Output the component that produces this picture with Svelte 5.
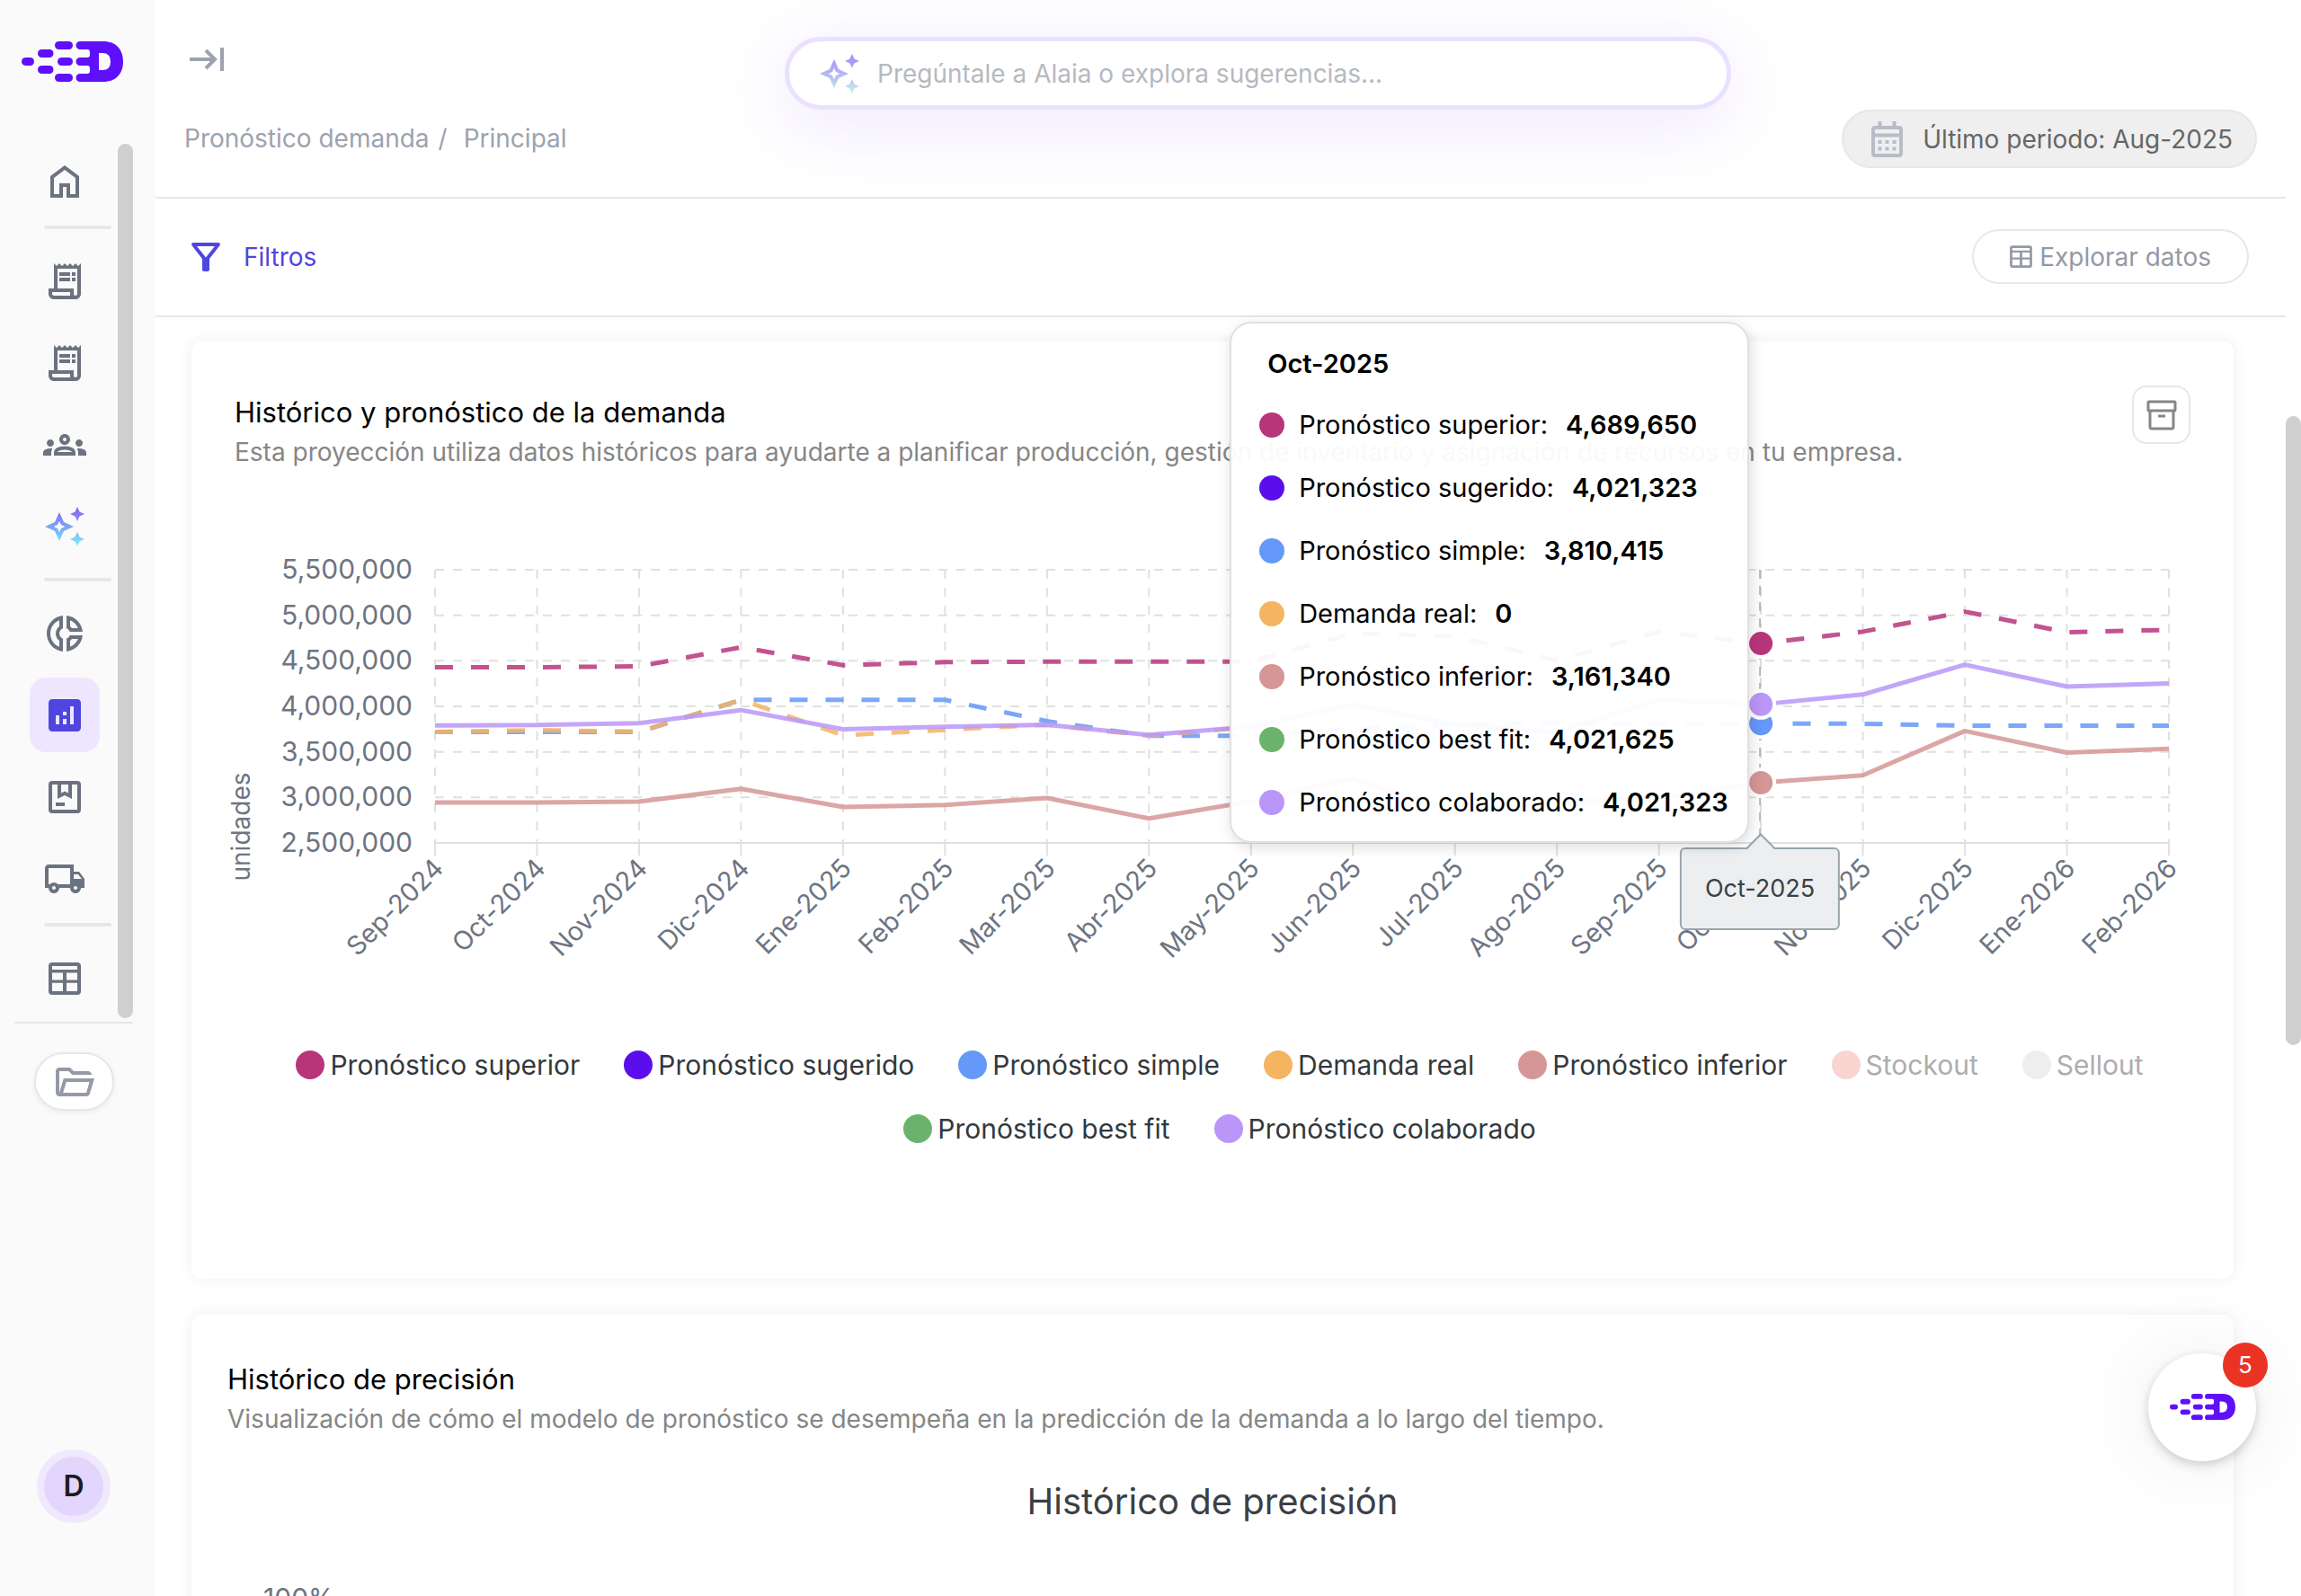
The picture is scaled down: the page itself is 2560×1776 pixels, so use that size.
<script lang="ts">
    interface Series {
        name: string;
        color: string;
        dashed?: boolean;
        line?: boolean;
        muted?: boolean;
        tip?: string;
        values?: number[];
    }

    const icons = {
        home: 'M6 19h3v-6h6v6h3v-9l-6-4.5L6 10v9Zm-2 2V9l8-6 8 6v12h-7v-6h-2v6H4Z',
        receipt: 'M19.5 3.5 18 2l-1.5 1.5L15 2l-1.5 1.5L12 2l-1.5 1.5L9 2 7.5 3.5 6 2v14H3v3c0 1.66 1.34 3 3 3h12c1.66 0 3-1.34 3-3V2l-1.5 1.5zM15 20H6c-.55 0-1-.45-1-1v-1h10v2zm4-1c0 .55-.45 1-1 1s-1-.45-1-1v-3H8V5h11v14zM9 7h6v2H9zM16 7h2v2h-2zM9 10h6v2H9zM16 10h2v2h-2z',
        groups: 'M4 13c1.1 0 2-.9 2-2s-.9-2-2-2-2 .9-2 2 .9 2 2 2zm1.13 1.1c-.37-.06-.74-.1-1.13-.1-.99 0-1.93.21-2.78.58C.48 14.9 0 15.62 0 16.43V18h4.5v-1.61c0-.83.23-1.61.63-2.29zM20 13c1.1 0 2-.9 2-2s-.9-2-2-2-2 .9-2 2 .9 2 2 2zm4 3.43c0-.81-.48-1.53-1.22-1.85-.85-.37-1.79-.58-2.78-.58-.39 0-.76.04-1.13.1.4.68.63 1.46.63 2.29V18H24v-1.57zm-7.76-2.78c-1.17-.52-2.61-.9-4.24-.9-1.63 0-3.07.39-4.24.9C6.68 14.13 6 15.21 6 16.39V18h12v-1.61c0-1.18-.68-2.26-1.76-2.74zM8.07 16c.09-.23.13-.39.91-.69.97-.38 1.99-.56 3.02-.56s2.05.18 3.02.56c.77.3.81.46.91.69H8.07zM12 8c.55 0 1 .45 1 1s-.45 1-1 1-1-.45-1-1 .45-1 1-1m0-2c-1.66 0-3 1.34-3 3s1.34 3 3 3 3-1.34 3-3-1.34-3-3-3z',
        sparkles: 'M19 9l1.25-2.75L23 5l-2.75-1.25L19 1l-1.25 2.75L15 5l2.75 1.25L19 9zm0 6l-1.25 2.75L15 19l2.75 1.25L19 23l1.25-2.75L23 19l-2.75-1.25L19 15zm-7.5-5.5L9 4 6.5 9.5 1 12l5.5 2.5L9 20l2.5-5.5L17 12l-5.5-2.5zm-1.51 3.49L9 15.17l-.99-2.18L5.83 12l2.18-.99L9 8.83l.99 2.18 2.18.99-2.18.99z',
        donut: 'M14.82 11h7.13c-.47-4.72-4.23-8.48-8.95-8.95v7.13c.85.31 1.51.97 1.82 1.82zM15 4.58C17 5.4 18.6 7 19.42 9h-3.43c-.28-.37-.62-.71-.99-.99V4.58zM2 12c0 5.19 3.95 9.45 9 9.95v-7.13C9.84 14.4 9 13.3 9 12c0-1.3.84-2.4 2-2.82V2.05c-5.05.5-9 4.76-9 9.95zm7-7.42v3.44c-1.23.92-2 2.39-2 3.98 0 1.59.77 3.06 2 3.99v3.44C6.04 18.24 4 15.35 4 12c0-3.35 2.04-6.24 5-7.42zm4 10.24v7.13c4.72-.47 8.48-4.23 8.95-8.95h-7.13c-.31.85-.97 1.51-1.82 1.82zm2 1.17c.37-.28.71-.61.99-.99h3.43C18.6 17 17 18.6 15 19.42v-3.43z',
        analytics: 'M19 3H5c-1.1 0-2 .9-2 2v14c0 1.1.9 2 2 2h14c1.1 0 2-.9 2-2V5c0-1.1-.9-2-2-2zM9 17H7v-5h2v5zm4 0h-2v-3h2v3zm0-5h-2v-2h2v2zm4 5h-2V7h2v10z',
        box: 'M5 3h14q2 0 2 2v14q0 2-2 2H5q-2 0-2-2V5q0-2 2-2zM5 5v14h14V5h-3v8l-4-2-4 2V5zM10 5v4.75l2-1 2 1V5zM7 15h5v2H7z',
        truck: 'M20 8h-3V4H3c-1.1 0-2 .9-2 2v11h2c0 1.66 1.34 3 3 3s3-1.34 3-3h6c0 1.66 1.34 3 3 3s3-1.34 3-3h2v-5l-3-4zm-.5 1.5 1.96 2.5H17V9.5h2.5zM6 18c-.55 0-1-.45-1-1s.45-1 1-1 1 .45 1 1-.45 1-1 1zm2.22-3c-.55-.61-1.33-1-2.22-1s-1.67.39-2.22 1H3V6h12v9H8.22zM18 18c-.55 0-1-.45-1-1s.45-1 1-1 1 .45 1 1-.45 1-1 1z',
        table: 'M5 3h14q2 0 2 2v14q0 2-2 2H5q-2 0-2-2V5q0-2 2-2zM5 5v2h14V5zM5 8.7v4h6v-4zM13 8.7v4h6v-4zM5 14.4V19h6v-4.6zM13 14.4V19h6v-4.6z',
        folder: 'M4 20q-.825 0-1.412-.587Q2 18.825 2 18V6q0-.825.588-1.412Q3.175 4 4 4h6l2 2h8q.825 0 1.413.588Q22 7.175 22 8H11.175l-2-2H4v12l2.4-8h17.1l-2.575 8.575q-.2.65-.738 1.038Q19.65 20 19 20Zm2.1-2H19l1.8-6H7.9Z',
        filter: 'M7 6h10l-5.01 6.3L7 6zm-2.75-.39C6.27 8.2 10 13 10 13v6c0 .55.45 1 1 1h2c.55 0 1-.45 1-1v-6s3.72-4.8 5.74-7.39c.51-.66.04-1.61-.79-1.61H5.04c-.83 0-1.3.95-.79 1.61z',
    };

    const nav = [
        [{ id: 'home', label: 'Inicio' }],
        [
            { id: 'receipt', label: 'Ventas' },
            { id: 'receipt', label: 'Compras' },
            { id: 'groups', label: 'Clientes' },
            { id: 'sparkles', label: 'Alaia' },
        ],
        [
            { id: 'donut', label: 'Segmentos' },
            { id: 'analytics', label: 'Pronóstico' },
            { id: 'box', label: 'Inventario' },
            { id: 'truck', label: 'Envíos' },
        ],
        [{ id: 'table', label: 'Datos' }],
    ];

    const months = [
        'Sep-2024', 'Oct-2024', 'Nov-2024', 'Dic-2024', 'Ene-2025', 'Feb-2025',
        'Mar-2025', 'Abr-2025', 'May-2025', 'Jun-2025', 'Jul-2025', 'Ago-2025',
        'Sep-2025', 'Oct-2025', 'Nov-2025', 'Dic-2025', 'Ene-2026', 'Feb-2026',
    ];

    // values in millions of units
    const series: Series[] = [
        {
            name: 'Pronóstico superior', color: '#b8357c', dashed: true, line: true, tip: '4,689,650',
            values: [4.429, 4.429, 4.439, 4.649, 4.452, 4.485, 4.491, 4.491, 4.491, 4.8, 4.769, 4.504, 4.82, 4.69, 4.82, 5.04, 4.813, 4.84],
        },
        { name: 'Pronóstico sugerido', color: '#5b0eeb', tip: '4,021,323' },
        {
            name: 'Pronóstico simple', color: '#6598f8', dashed: true, line: true, tip: '3,810,415',
            values: [3.719, 3.719, 3.719, 4.071, 4.071, 4.071, 3.837, 3.676, 3.676, 3.755, 3.8, 3.817, 3.8, 3.81, 3.809, 3.787, 3.787, 3.787],
        },
        {
            name: 'Demanda real', color: '#f4b460', dashed: true, line: true, tip: '0',
            values: [3.719, 3.739, 3.722, 4.071, 3.683, 3.742, 3.798, 3.676, 3.775, 4.01, 3.8, 3.716],
        },
        {
            name: 'Pronóstico inferior', color: '#d59795', line: true, tip: '3,161,340',
            values: [2.944, 2.944, 2.953, 3.095, 2.894, 2.917, 2.993, 2.769, 2.956, 3.21, 2.83, 2.95, 2.99, 3.161, 3.243, 3.73, 3.492, 3.534],
        },
        { name: 'Stockout', color: '#fad4d1', muted: true },
        { name: 'Sellout', color: '#eeeeee', muted: true },
        { name: 'Pronóstico best fit', color: '#6bb26c', tip: '4,021,625' },
        {
            name: 'Pronóstico colaborado', color: '#ba96f8', line: true, tip: '4,021,323',
            values: [3.79, 3.796, 3.814, 3.959, 3.749, 3.775, 3.798, 3.686, 3.775, 4.024, 3.8, 3.716, 4.07, 4.021, 4.13, 4.458, 4.217, 4.251],
        },
    ];

    const lines = series.filter((s) => s.line);
    const tips = series.filter((s) => s.tip);
    const ticks = [5.5, 5, 4.5, 4, 3.5, 3, 2.5];

    // plot box inside the chart
    const left = 223;
    const right = 24;
    const top = 74;
    const bottom = 378;

    let hovered = $state(13);
    let width = $state(2176);

    const step = $derived((width - left - right) / (months.length - 1));
    const hoverX = $derived(x(hovered));

    function x(i: number) {
        return left + i * step;
    }

    function y(v: number) {
        return bottom - ((v - 2.5) / 3) * (bottom - top);
    }

    function points(values: number[]) {
        return values.map((v, i) => `${x(i)},${y(v)}`).join(' ');
    }

    function format(v: number) {
        return (v * 1000000).toLocaleString('en-US');
    }
</script>

{#snippet icon(id: string, fill = 'currentColor')}
    <svg class="icon" viewBox="0 0 24 24" aria-hidden="true">
        <path d={icons[id]} {fill} fill-rule="evenodd" />
    </svg>
{/snippet}

{#snippet logo()}
    <svg class="logo" viewBox="0 0 113 45" aria-hidden="true" fill="currentColor">
        <rect x="0" y="18" width="14" height="9" rx="4.5" />
        <rect x="18" y="9" width="17.5" height="9" rx="4.5" />
        <rect x="18" y="27" width="17.5" height="9" rx="4.5" />
        <rect x="37" y="0" width="20" height="9" rx="4.5" />
        <rect x="40" y="18" width="17" height="9" rx="4.5" />
        <rect x="37" y="36" width="20" height="9" rx="4.5" />
        <path
            fill-rule="evenodd"
            d="M65 0H91C105 0 113 9 113 22.5S105 45 91 45H65a4.5 4.5 0 0 1 0-9h8q3 0 3-3v-3q0-3-3-3h-8a4.5 4.5 0 0 1 0-9h8q3 0 3-3v-3q0-3-3-3h-8a4.5 4.5 0 0 1 0-9zM86 13v19h4q9 0 9-9.5t-9-9.5z"
        />
    </svg>
{/snippet}

<svg class="defs" width="0" height="0" aria-hidden="true">
    <defs>
        <linearGradient id="spark" x1="0" y1="0" x2="0" y2="1">
            <stop offset="0" stop-color="#8b5cf6" />
            <stop offset="0.5" stop-color="#7aa5f8" />
            <stop offset="1" stop-color="#7df0fa" />
        </linearGradient>
        <linearGradient id="spark-soft" x1="0" y1="0" x2="0" y2="1">
            <stop offset="0" stop-color="#aa86f8" />
            <stop offset="0.5" stop-color="#b4b6f4" />
            <stop offset="1" stop-color="#c2f3ea" />
        </linearGradient>
    </defs>
</svg>

<div class="app">
    <aside>
        <a class="brand" href="#inicio" aria-label="Inicio">{@render logo()}</a>

        <div class="scroller">
            <nav>
                {#each nav as group, g}
                    {#if g > 0}
                        <hr class:wide={g === 2} />
                    {/if}
                    {#each group as item}
                        <a href="#{item.id}" class:active={item.id === 'analytics'} aria-label={item.label}>
                            {@render icon(item.id, item.id === 'sparkles' ? 'url(#spark)' : 'currentColor')}
                        </a>
                    {/each}
                {/each}
            </nav>
            <div class="thumb"></div>
        </div>

        <div class="files">
            <button aria-label="Archivos">{@render icon('folder')}</button>
        </div>

        <button class="avatar" aria-label="Cuenta">D</button>
    </aside>

    <main>
        <header>
            <div class="where">
                <button class="collapse" aria-label="Expandir menú">
                    <svg viewBox="0 0 38 26" aria-hidden="true" fill="none" stroke="currentColor" stroke-width="4">
                        <path d="M0 13H28M18 3l10 10-10 10M36 0v26" />
                    </svg>
                </button>
                <div class="crumbs">
                    <a href="#demanda">Pronóstico demanda</a>
                    <span>/</span>
                    <a href="#principal">Principal</a>
                </div>
            </div>

            <label class="search">
                {@render icon('sparkles', 'url(#spark-soft)')}
                <input type="text" aria-label="Buscar" placeholder="Pregúntale a Alaia o explora sugerencias..." />
            </label>

            <button class="period">
                <svg viewBox="0 0 35 40" aria-hidden="true" fill="none" stroke="currentColor" stroke-width="4">
                    <rect x="2" y="7" width="31" height="31" rx="2" />
                    <path d="M2 15.5h31M9.5 0v7M25.5 0v7" />
                    <path d="M7.5 23h4M15.5 23h4M23.5 23h4M7.5 30.5h4M15.5 30.5h4M23.5 30.5h4" />
                </svg>
                Último periodo: Aug-2025
            </button>
        </header>

        <div class="toolbar">
            <button class="filters">{@render icon('filter')} Filtros</button>
            <button class="explore">{@render icon('table')} Explorar datos</button>
        </div>

        <div class="content">
            <section class="card">
                <div class="head">
                    <div class="titles">
                        <h2>Histórico y pronóstico de la demanda</h2>
                        <p>Esta proyección utiliza datos históricos para ayudarte a planificar producción, gestión de inventario y asignación de recursos en tu empresa.</p>
                    </div>
                    <button class="archive" aria-label="Archivar">
                        <svg viewBox="0 0 34 34" aria-hidden="true" fill="none" stroke="currentColor" stroke-width="3">
                            <rect x="2" y="2" width="30" height="10" rx="1" />
                            <path d="M4 12v18q0 2 2 2h22q2 0 2-2V12M13 18h8" />
                        </svg>
                    </button>
                </div>

                <div class="chart" bind:clientWidth={width}>
                    <svg class="plot" role="img" aria-label="Histórico y pronóstico de la demanda">
                        {#each ticks as t}
                            <line class="grid" x1={left} x2={width - right} y1={y(t)} y2={y(t)} />
                            <text class="value" x={left - 25} y={y(t) + 10}>{format(t)}</text>
                        {/each}
                        {#each months as month, i}
                            <line class="grid" x1={x(i)} x2={x(i)} y1={top} y2={bottom} />
                            <line class="axis" x1={x(i)} x2={x(i)} y1={bottom} y2={bottom + 14} />
                            <text class="month" transform="translate({x(i) + 11} {bottom + 30}) rotate(-45)">{month}</text>
                        {/each}
                        <line class="axis" x1={left} x2={width - right} y1={bottom} y2={bottom} />
                        <text class="unit" transform="translate(17 360) rotate(-90)">unidades</text>

                        {#each lines as s}
                            <polyline class="line" class:dashed={s.dashed} points={points(s.values)} stroke={s.color} />
                        {/each}

                        <line class="pointer" x1={hoverX - 1} x2={hoverX - 1} y1={top} y2={bottom} />
                        {#each lines as s}
                            {#if s.values[hovered]}
                                <circle class="dot" cx={hoverX} cy={y(s.values[hovered])} r="15" fill={s.color} />
                            {/if}
                        {/each}
                    </svg>

                    <div class="tag" style:left="{hoverX - 1}px">{months[hovered]}</div>

                    <div class="tooltip" style:right="{width - hoverX + 13}px">
                        <strong>{months[hovered]}</strong>
                        <ul>
                            {#each tips as s}
                                <li>
                                    <i style:background={s.color}></i>
                                    <span>{s.name}:</span>
                                    <b>{s.tip}</b>
                                </li>
                            {/each}
                        </ul>
                    </div>
                </div>

                <div class="legend">
                    {#each series as s}
                        <button class:muted={s.muted}>
                            <i style:background={s.color}></i>{s.name}
                        </button>
                    {/each}
                </div>
            </section>

            <section class="card precision">
                <div class="titles">
                    <h2>Histórico de precisión</h2>
                    <p>Visualización de cómo el modelo de pronóstico se desempeña en la predicción de la demanda a lo largo del tiempo.</p>
                </div>
                <h3>Histórico de precisión</h3>
                <div class="percent">100%</div>
            </section>
        </div>

        <div class="page-thumb"></div>
    </main>

    <button class="chat" aria-label="Abrir chat">
        {@render logo()}
        <span class="badge">5</span>
    </button>
</div>

<style>
    :global(body) {
        margin: 0;
        background: #fff;
    }

    .app {
        display: flex;
        height: 100vh;
        overflow: hidden;
        position: relative;
        font-family: Inter, "Liberation Sans", sans-serif;
        font-size: 28px;
        line-height: 36px;
        color: #000;
    }

    .app * {
        box-sizing: border-box;
    }

    .defs {
        position: absolute;
    }

    button {
        display: flex;
        align-items: center;
        justify-content: center;
        padding: 0;
        border: 0;
        background: none;
        font: inherit;
        color: inherit;
        white-space: nowrap;
        cursor: pointer;
    }

    a {
        color: inherit;
        text-decoration: none;
    }

    .icon {
        display: block;
        width: 48px;
        height: 48px;
        flex: none;
    }

    .logo {
        display: block;
        width: 100%;
        color: #5f0ffa;
    }

    /* sidebar */
    aside {
        display: flex;
        flex-direction: column;
        width: 173px;
        flex: none;
        background: #fafafa;
        color: #6b7280;
    }

    .brand {
        width: 113px;
        margin: 46px 0 69px 24px;
    }

    .scroller {
        display: flex;
        justify-content: space-between;
        margin: 0 25px 0 33px;
        padding-bottom: 4px;
    }

    nav {
        display: flex;
        flex-direction: column;
        gap: 8px;
        padding-bottom: 3px;
    }

    nav a {
        display: flex;
        align-items: center;
        justify-content: center;
        width: 78px;
        height: 83px;
        border-radius: 18px;
    }

    nav a.active {
        background: #eee6fe;
        color: #4f46df;
    }

    nav hr {
        width: 75px;
        height: 4px;
        margin: 0 0 8px 16px;
        border: 0;
        border-radius: 2px;
        background: #e5e7eb;
    }

    nav hr.wide {
        margin-top: 8px;
    }

    .thumb {
        width: 17px;
        border-radius: 9px;
        background: #cfcfcf;
        margin-left: -16px;
    }

    .files {
        display: flex;
        justify-content: center;
        margin: 0 25px 0 16px;
        padding-top: 32px;
        border-top: 2px solid #e5e7eb;
    }

    .files button {
        width: 89px;
        height: 65px;
        border: 2px solid #e5e7eb;
        border-radius: 33px;
        background: #fff;
        color: #949aa5;
        box-shadow: 0 2px 6px rgba(0, 0, 0, 0.06);
    }

    .avatar {
        width: 82px;
        height: 82px;
        margin: auto 0 81px 41px;
        border: 8px solid #f0e9fe;
        border-radius: 50%;
        background: #e2d6fc;
        font-size: 32px;
        font-weight: 600;
        color: #1c1c1c;
    }

    /* header */
    main {
        display: flex;
        flex-direction: column;
        flex: 1;
        min-width: 0;
        padding-right: 17px;
        position: relative;
    }

    header {
        display: grid;
        grid-template-columns: 668fr 1053fr 585fr;
        align-items: start;
        padding: 41px 32px 32px;
        border-bottom: 2px solid #e5e7eb;
        color: #9ca3af;
    }

    .where {
        display: flex;
        flex-direction: column;
        align-items: flex-start;
        gap: 57px;
        padding-top: 12px;
    }

    .collapse {
        margin-left: 6px;
    }

    .collapse svg {
        width: 38px;
        height: 26px;
    }

    .crumbs {
        display: flex;
        gap: 10px;
    }

    .crumbs a:last-child {
        margin-left: 8px;
    }

    .search {
        display: flex;
        align-items: center;
        gap: 16px;
        height: 81px;
        padding: 0 32px;
        border: 5px solid #e9e1fe;
        border-radius: 41px;
        background: #fff;
        box-shadow: 0 16px 80px rgba(124, 58, 237, 0.12);
    }

    input {
        flex: 1;
        min-width: 0;
        border: 0;
        outline: 0;
        background: none;
        font: inherit;
    }

    input::placeholder {
        color: #b6b9c0;
        opacity: 1;
    }

    .period {
        align-self: end;
        justify-self: end;
        gap: 22px;
        height: 65px;
        margin-top: 81px;
        padding: 0 25px 0 31px;
        border: 2px solid #e5e7eb;
        border-radius: 33px;
        background: #efefef;
        color: #666;
    }

    .period svg {
        width: 35px;
        height: 40px;
        color: #b9bcc6;
    }

    .toolbar {
        display: flex;
        align-items: center;
        justify-content: space-between;
        padding: 34px 41px 35px 32px;
        border-bottom: 2px solid #e5e7eb;
    }

    .filters {
        gap: 18px;
        color: #4f46df;
    }

    .explore {
        gap: 4px;
        height: 61px;
        padding: 0 40px 0 36px;
        border: 2px solid #e5e7eb;
        border-radius: 31px;
        color: #949aa6;
    }

    .explore .icon {
        width: 33px;
        height: 33px;
    }

    /* cards */
    .content {
        display: flex;
        flex-direction: column;
        gap: 40px;
        flex: 1;
        min-height: 0;
        padding: 27px 58px 0 40px;
    }

    .card {
        flex: none;
        padding: 49px 48px 0;
        border-radius: 12px;
        background: #fff;
        box-shadow: 0 0 16px rgba(30, 41, 59, 0.08);
    }

    .head {
        display: flex;
        align-items: flex-start;
        justify-content: space-between;
    }

    .titles {
        padding-top: 7px;
    }

    h2,
    h3,
    p {
        margin: 0;
        font-weight: 400;
    }

    h2 {
        font-size: 31px;
        line-height: 45px;
    }

    p {
        line-height: 44px;
        color: #868686;
        white-space: nowrap;
    }

    .archive {
        width: 65px;
        height: 65px;
        border: 2px solid #e5e7eb;
        border-radius: 16px;
        color: #868686;
        flex: none;
    }

    .archive svg {
        width: 34px;
        height: 34px;
    }

    .chart {
        position: relative;
        margin-top: 35px;
        font-size: 30px;
    }

    .plot {
        display: block;
        width: 100%;
        height: 540px;
        overflow: visible;
    }

    .grid {
        stroke: #e0e0e0;
        stroke-width: 2;
        stroke-dasharray: 10 10;
    }

    .axis {
        stroke: #e0e0e0;
        stroke-width: 2;
    }

    .plot text {
        fill: #6e7482;
        text-anchor: end;
    }

    .plot .month {
        font-size: 29px;
    }

    .plot .unit {
        text-anchor: middle;
        font-size: 28px;
    }

    .line {
        fill: none;
        stroke-width: 5;
        stroke-linejoin: bevel;
        opacity: 0.85;
    }

    .dashed {
        stroke-dasharray: 20 20;
    }

    .pointer {
        stroke: #b8b8b8;
        stroke-width: 2;
        stroke-dasharray: 10 8;
    }

    .dot {
        stroke: #fff;
        stroke-width: 4;
    }

    .tag {
        position: absolute;
        top: 383px;
        padding: 26px 26px;
        border: 2px solid #98a6ae;
        border-radius: 6px;
        background: #eceef0;
        font-size: 27px;
        color: #3b4045;
        transform: translateX(-50%);
    }

    .tag::before {
        content: "";
        position: absolute;
        top: -13px;
        left: calc(50% - 11px);
        width: 22px;
        height: 22px;
        border-top: 2px solid #98a6ae;
        border-left: 2px solid #98a6ae;
        background: linear-gradient(135deg, #eceef0 50%, transparent 50%);
        transform: rotate(45deg);
    }

    .tooltip {
        position: absolute;
        top: -202px;
        width: 578px;
        padding: 27px 24px 8px 31px;
        border: 2px solid #e0e0e0;
        border-radius: 24px;
        background: rgba(255, 255, 255, 0.95);
        box-shadow: 2px 4px 16px rgba(0, 0, 0, 0.14);
        font-size: 29px;
        white-space: nowrap;
    }

    .tooltip strong {
        display: block;
        margin-left: 9px;
        font-weight: 600;
    }

    .tooltip ul {
        margin: 15px 0 0;
        padding: 0;
        list-style: none;
    }

    .tooltip li {
        display: flex;
        align-items: center;
        height: 70px;
    }

    .tooltip i {
        width: 28px;
        height: 28px;
        flex: none;
        margin-right: 16px;
        border-radius: 50%;
    }

    .tooltip b {
        margin-left: 20px;
        font-weight: 600;
    }

    .legend {
        display: flex;
        flex-wrap: wrap;
        justify-content: center;
        gap: 31px 49px;
        margin-top: 65px;
        padding: 0 0 147px 16px;
        font-size: 30px;
    }

    .legend button {
        height: 40px;
        color: #33383d;
    }

    .legend .muted {
        color: #adadad;
    }

    .legend i {
        width: 32px;
        height: 32px;
        margin-right: 6px;
        border-radius: 50%;
    }

    .precision {
        padding: 42px 40px 0;
    }

    h3 {
        margin-top: 46px;
        font-size: 40px;
        line-height: 48px;
        text-align: center;
        color: #3b4045;
    }

    .percent {
        margin: 65px 0 0 40px;
        font-size: 30px;
        color: #6e7482;
    }

    .page-thumb {
        position: absolute;
        right: 0;
        top: 463px;
        width: 17px;
        height: 700px;
        border-radius: 9px;
        background: #cfcfcf;
    }

    /* floating chat button */
    .chat {
        position: absolute;
        right: 50px;
        bottom: 150px;
        width: 120px;
        height: 120px;
        border-radius: 50%;
        background: #fff;
        box-shadow: 0 4px 12px rgba(0, 0, 0, 0.18), 0 0 100px rgba(0, 0, 0, 0.08);
    }

    .chat .logo {
        width: 73px;
    }

    .badge {
        position: absolute;
        top: -12px;
        right: -13px;
        width: 50px;
        height: 50px;
        border-radius: 50%;
        background: #eb3323;
        font-size: 26px;
        line-height: 50px;
        color: #fff;
    }
</style>
